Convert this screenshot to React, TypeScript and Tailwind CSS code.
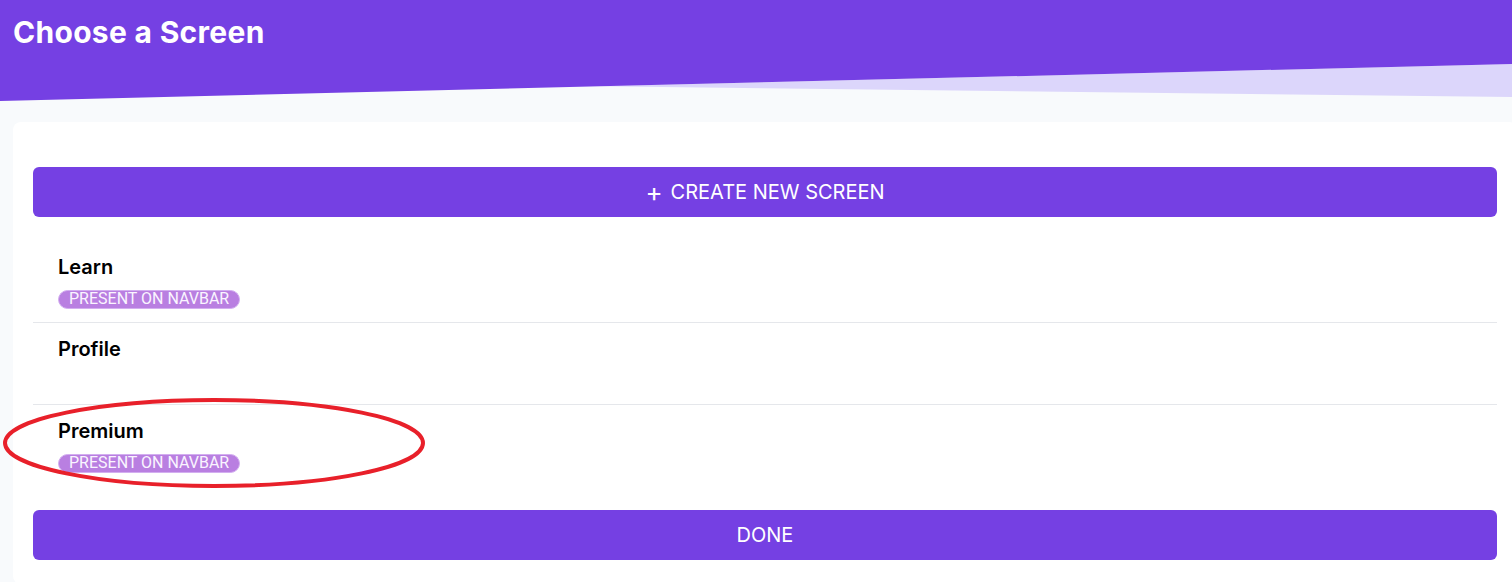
import React from 'react'

const screens = [
  { name: 'Learn', navbar: true },
  { name: 'Profile', navbar: false },
  { name: 'Premium', navbar: true },
]

function NavbarBadge() {
  return (
    <span className="inline-flex h-[19px] items-center rounded-full border border-[#d3aef0] bg-[#b97fe1] px-[10px] font-['Roboto',sans-serif] text-[16px] leading-none text-[#faf5ff]">
      PRESENT ON NAVBAR
    </span>
  )
}

export default function App() {
  return (
    <div className="relative h-[582px] w-[1512px] overflow-hidden bg-[#f8fafc] font-['Inter',sans-serif]">
      {/* header with slanted edge */}
      <div className="relative h-[102px]">
        <svg
          className="absolute inset-0"
          width="1512"
          height="102"
          viewBox="0 0 1512 102"
          preserveAspectRatio="none"
        >
          <polygon points="600,86.3 1512,64 1512,97" fill="#dcd6fb" />
          <polygon points="0,0 1512,0 1512,64 0,101" fill="#7540e3" />
        </svg>
        <h1 className="relative px-[13px] pt-[14px] text-[30px] leading-9 font-bold tracking-[0.3px] text-white">
          Choose a Screen
        </h1>
      </div>

      {/* card */}
      <div className="ml-[13px] mt-[20px] w-[1504px] rounded-lg bg-white px-[20px] pt-[45px] pb-6">
        <button className="flex h-[50px] w-full items-center justify-center gap-[8px] rounded-md bg-[#7540e3] text-[20px] text-white">
          <span className="text-[26px] leading-none">+</span>
          <span>CREATE NEW SCREEN</span>
        </button>

        <div className="mt-[24px] mb-[23px]">
          {screens.map((s, i) => (
            <div
              key={s.name}
              className={
                'h-[82px] px-[25px] py-3 ' +
                (i < screens.length - 1 ? 'border-b border-[#e5e7eb]' : '')
              }
            >
              <div className="text-[20px] leading-7 font-semibold text-black">{s.name}</div>
              <div className="mt-[5px] h-[20px]">{s.navbar && <NavbarBadge />}</div>
            </div>
          ))}
        </div>

        <button className="flex h-[50px] w-full items-center justify-center rounded-md bg-[#7540e3] text-[20px] text-white">
          DONE
        </button>
      </div>

      {/* red annotation around the Premium row */}
      <svg
        className="pointer-events-none absolute left-0 top-[390px]"
        width="440"
        height="110"
        viewBox="0 0 440 110"
      >
        <ellipse cx="214" cy="53" rx="209" ry="43" fill="none" stroke="#e8202a" strokeWidth="4" />
      </svg>
    </div>
  )
}
